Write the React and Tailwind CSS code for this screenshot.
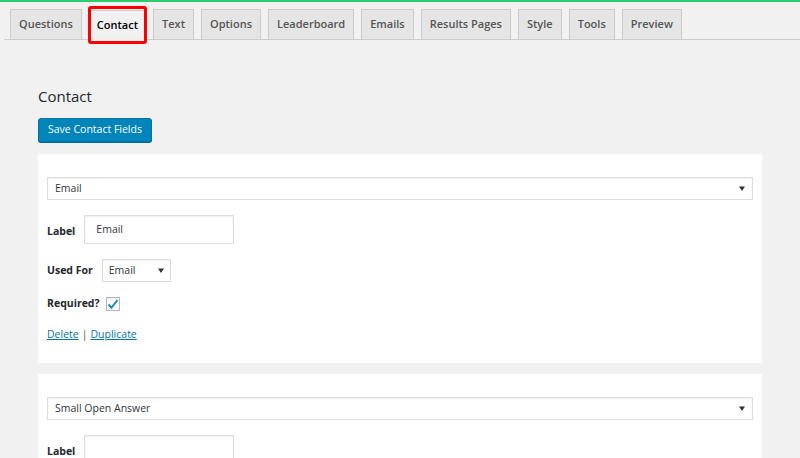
import React from "react";

const tabs = [
  "Questions",
  "Contact",
  "Text",
  "Options",
  "Leaderboard",
  "Emails",
  "Results Pages",
  "Style",
  "Tools",
  "Preview",
];

function Caret() {
  return (
    <svg width="6" height="5" viewBox="0 0 6 5" className="shrink-0">
      <path d="M0 0.5h6L3 5z" fill="#333" />
    </svg>
  );
}

function FieldCard({ type, label, usedFor, required, partial }) {
  return (
    <div className="bg-white pt-[23px] px-[9px] pb-[20px]">
      {/* field type select */}
      <div className="h-[23px] border border-[#ddd] shadow-[inset_0_1px_2px_rgba(0,0,0,0.07)] flex items-center justify-between pl-[7px] pr-[7px] text-[10.5px] text-[#32373c]">
        <span>{type}</span>
        <Caret />
      </div>

      <div className="mt-[15px] h-[29px] flex items-center gap-[9px]">
        <span className="text-[10.5px] font-bold text-[#23282d] mt-[4px]">Label</span>
        <div className="w-[150px] h-[29px] border border-[#ddd] shadow-[inset_0_1px_2px_rgba(0,0,0,0.07)] flex items-center pl-[11px] text-[10.5px] text-[#32373c]">
          {label}
        </div>
      </div>

      {!partial && (
        <>
          <div className="mt-[15px] h-[23px] flex items-center gap-[9px]">
            <span className="text-[10.5px] font-bold text-[#23282d]">Used For</span>
            <div className="w-[69px] h-[23px] border border-[#ddd] shadow-[inset_0_1px_2px_rgba(0,0,0,0.07)] flex items-center justify-between pl-[6px] pr-[6px] text-[10.5px] text-[#32373c]">
              <span>{usedFor}</span>
              <Caret />
            </div>
          </div>

          <div className="mt-[14px] h-[16px] flex items-center gap-[6px]">
            <span className="text-[10.5px] font-bold text-[#23282d]">Required?</span>
            <div className="w-[14px] h-[14px] border border-[#b4b9be] shadow-[inset_0_1px_2px_rgba(0,0,0,0.1)] flex items-center justify-center">
              {required && (
                <svg width="12" height="11" viewBox="0 0 12 11">
                  <path d="M1.5 5.5l3 3.2L10.5 1" fill="none" stroke="#1e8cbe" strokeWidth="2" />
                </svg>
              )}
            </div>
          </div>

          <div className="mt-[15px] h-[16px] flex items-center text-[10.5px] text-[#0073aa]">
            <span className="underline">Delete</span>
            <span className="text-[#555] px-[3px]">|</span>
            <span className="underline">Duplicate</span>
          </div>
        </>
      )}
    </div>
  );
}

export default function App() {
  return (
    <div
      className="w-[800px] h-[458px] overflow-hidden bg-[#f1f1f1]"
      style={{ fontFamily: '"Open Sans", "Noto Sans", sans-serif' }}
    >
      <div className="h-[2px] bg-[#2ecc71]" />

      {/* tabs */}
      <div className="mt-[7px] ml-[4px] border-b border-[#ccc] flex items-end pl-[6px] h-[31px]">
        {tabs.map((t) => {
          const active = t === "Contact";
          return (
            <div key={t} className="relative mr-[7px]">
              <div
                className={
                  active
                    ? "h-[30px] px-[7px] flex items-center border border-[#ccc] border-b-[#f1f1f1] bg-[#f1f1f1] text-[11px] font-semibold text-black -mb-px"
                    : "h-[30px] px-[8px] flex items-center border border-[#ccc] border-b-0 bg-[#e5e5e5] text-[11px] font-semibold text-[#555]"
                }
              >
                {t}
              </div>
              {active && (
                <div className="absolute -left-[1px] -right-[1px] -top-[4px] -bottom-[5px] border-[3px] border-[#ff0000] rounded-[3px]" />
              )}
            </div>
          );
        })}
      </div>

      <div className="px-[38px]">
        <h2 className="mt-[47px] text-[15px] leading-[18px] text-[#23282d]">Contact</h2>
        <button className="mt-[13px] h-[24px] px-[9px] bg-[#0085ba] border border-[#0073aa] rounded-[3px] text-white text-[10.5px] shadow-[0_1px_0_#006799]">
          Save Contact Fields
        </button>

        <div className="mt-[12px] flex flex-col gap-[11px]">
          <FieldCard type="Email" label="Email" usedFor="Email" required />
          <FieldCard type="Small Open Answer" label="" partial />
        </div>
      </div>
    </div>
  );
}
